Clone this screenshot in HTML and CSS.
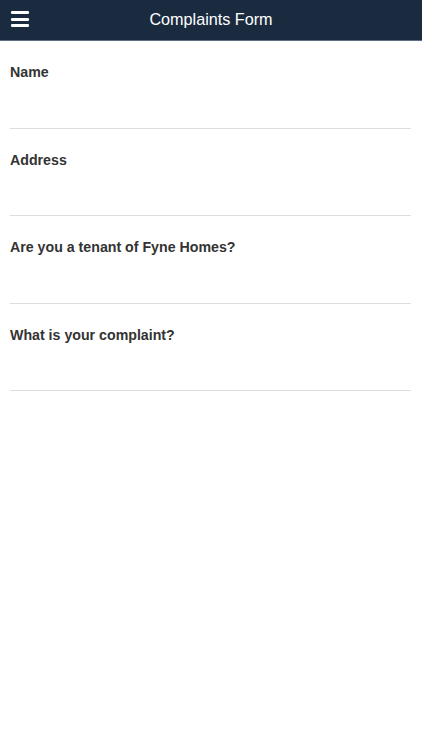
FILE: index.html
```html
<!DOCTYPE html>
<html lang="en">
<head>
<meta charset="utf-8">
<title>Complaints Form</title>
<link rel="stylesheet" href="styles.css">
</head>
<body>
<header class="topbar">
  <button class="menu-btn" aria-label="Menu">
    <span class="bar"></span><span class="bar"></span><span class="bar"></span>
  </button>
  <h1 class="title">Complaints Form</h1>
</header>
<form class="form">
  <div class="field"><label class="label">Name</label><div class="input"></div></div>
  <div class="field"><label class="label">Address</label><div class="input"></div></div>
  <div class="field"><label class="label">Are you a tenant of Fyne Homes?</label><div class="input"></div></div>
  <div class="field"><label class="label">What is your complaint?</label><div class="input"></div></div>
</form>
</body>
</html>
```
FILE: styles.css
```css
html, body {
  margin: 0;
  padding: 0;
  background: #ffffff;
  font-family: "Liberation Sans", Arial, Helvetica, sans-serif;
}
.topbar {
  height: 40px;
  background: #1a2b40;
  border-bottom: 1px solid #5d6d82;
  display: flex;
  align-items: center;
  justify-content: center;
  position: relative;
}
.menu-btn {
  position: absolute;
  left: 11px;
  top: 11px;
  width: 18px;
  height: 16px;
  padding: 0;
  margin: 0;
  border: 0;
  background: transparent;
  display: flex;
  flex-direction: column;
  justify-content: space-between;
}
.bar {
  display: block;
  height: 3px;
  width: 18px;
  background: #ffffff;
  border-radius: 1px;
}
.title {
  margin: 0;
  margin-top: -3px;
  color: #ffffff;
  font-size: 16.2px;
  font-weight: normal;
  line-height: 20px;
}
.form {
  padding: 0 11px 0 10px;
}
.field {
  padding-top: 22px;
  border-bottom: 1px solid #dedede;
}
.label {
  display: block;
  font-size: 14.2px;
  font-weight: bold;
  line-height: 18px;
  color: #333333;
}
.input {
  height: 46.5px;
}
```
